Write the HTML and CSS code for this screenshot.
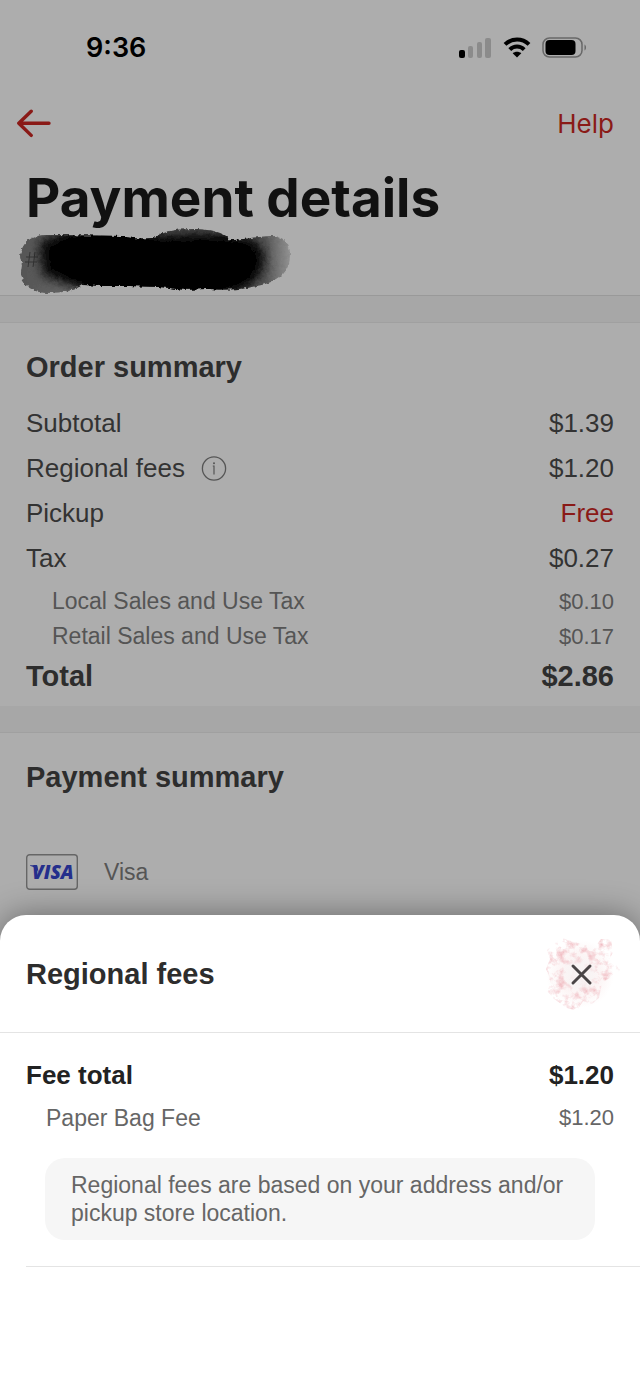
FILE: index.html
```html
<!DOCTYPE html>
<html lang="en">
<head>
<meta charset="utf-8">
<meta name="viewport" content="width=device-width, initial-scale=1">
<title>Payment details</title>
<link rel="stylesheet" href="styles.css">
</head>
<body>
<div class="screen">
  <div class="status">
    <span class="time">9:36</span>
    <span class="indicators">
      <svg width="34" height="22" viewBox="0 0 34 22" aria-hidden="true">
        <rect x="1" y="13" width="6" height="8" rx="2" fill="#000"/>
        <rect x="10" y="9" width="5" height="12" rx="2" fill="#8b8b8b"/>
        <rect x="19" y="5" width="5" height="16" rx="2" fill="#8b8b8b"/>
        <rect x="27" y="1" width="6" height="20" rx="2" fill="#8b8b8b"/>
      </svg>
      <svg width="28" height="22" viewBox="0 0 28 22" aria-hidden="true">
        <path d="M2 7.400C8.800 .9 19.200 .9 26 7.400" fill="none" stroke="#000" stroke-width="4"/>
        <path d="M6.800 12.600c4.200-4 10.200-4 14.400 0" fill="none" stroke="#000" stroke-width="4"/>
        <path d="M14 20.500l-4.300-4.300c2.400-2 6.200-2 8.600 0z" fill="#000"/>
      </svg>
      <svg width="46" height="22" viewBox="0 0 46 22" aria-hidden="true">
        <rect x="1" y="1" width="39" height="19" rx="6.500" fill="none" stroke="#686868" stroke-width="1.500"/>
        <rect x="3.500" y="3" width="30" height="15" rx="4" fill="#000"/>
        <path d="M42.500 7.500c2 1.200 2 4.800 0 6z" fill="#686868"/>
      </svg>
    </span>
  </div>

  <header class="header">
    <nav class="nav">
      <button class="icon-button" type="button" aria-label="Back">
        <svg width="36" height="30" viewBox="0 0 36 30" aria-hidden="true">
          <path d="M33 14.200H3M15.200 2.200L2.800 14.200l12.400 12.200" fill="none" stroke="#8a1a17" stroke-width="3.400" stroke-linecap="round" stroke-linejoin="round"/>
        </svg>
      </button>
      <a class="help" href="#help">Help</a>
    </nav>
    <h1 class="title">Payment details</h1>
    <svg class="scribble" width="274" height="67" viewBox="0 0 274 67" aria-hidden="true">
      <defs>
        <linearGradient id="edge" x1="0" x2="1" y1="0" y2="0">
          <stop offset="0" stop-color="#555"/>
          <stop offset=".25" stop-color="#6a6a6a"/>
          <stop offset=".3" stop-color="#222"/>
          <stop offset=".5" stop-color="#444"/>
          <stop offset=".75" stop-color="#444"/>
          <stop offset=".9" stop-color="#555"/>
          <stop offset="1" stop-color="#999"/>
        </linearGradient>
        <clipPath id="blot">
          <path d="M1 28C3 14 12 7 28 7l74 1c12 3 20 3 32 2 9-6 20-9 40-9 20 0 34 5 37 11l4 0c15-1 25-4 38-4 13 0 19 9 18 21-1 18-15 26-34 29-14 4-31 4-45 3-13 0-28 2-41-1-20-2-44-2-62-2l-26-1C57 62 45 65 27 65 12 64 2 56 2 44l1-7z"/>
        </clipPath>
        <filter id="rough" x="-5%" y="-10%" width="110%" height="120%">
          <feTurbulence type="fractalNoise" baseFrequency=".25" numOctaves="2" seed="4" result="n"/>
          <feDisplacementMap in="SourceGraphic" in2="n" scale="4" xChannelSelector="R" yChannelSelector="G"/>
          <feGaussianBlur stdDeviation=".5"/>
        </filter>
        <filter id="soft" x="-20%" y="-50%" width="140%" height="200%">
          <feGaussianBlur stdDeviation="6"/>
        </filter>
      </defs>
      <g filter="url(#rough)">
        <g clip-path="url(#blot)">
          <rect width="274" height="67" fill="url(#edge)"/>
          <path d="M20 14l30-12h60l30 10 40-4 30 2 25 4c12 6 14 24 2 36l-37 18H70L56 56 24 48z" fill="#000" filter="url(#soft)"/>
          <rect x="44" y="14" width="190" height="38" fill="#000" filter="url(#soft)"/>
          <path d="M60 6h60l15 8h70l20 2v44H80l-16-4z" fill="#000"  filter="url(#soft)"/>
        </g>
      </g>
      <path d="M11 24l-2 15M16 24l-2 15M7 29h12M6 34h12" stroke="#000" stroke-width="1" opacity=".4"/>
    </svg>
  </header>

  <section class="section">
    <h2 class="heading">Order summary</h2>
    <dl class="rows">
      <div class="row"><dt>Subtotal</dt><dd>$1.39</dd></div>
      <div class="row">
        <dt class="with-info">Regional fees
          <button class="icon-button" type="button" aria-label="About regional fees">
            <svg width="26" height="26" viewBox="0 0 26 26" aria-hidden="true">
              <circle cx="13" cy="12.500" r="11.600" fill="none" stroke="#555" stroke-width="1.300"/>
              <path d="M11.800 10H13v8.500" fill="none" stroke="#555" stroke-width="1.200"/>
              <circle cx="13" cy="7.200" r="1" fill="#555"/>
            </svg>
          </button>
        </dt>
        <dd>$1.20</dd>
      </div>
      <div class="row"><dt>Pickup</dt><dd class="free">Free</dd></div>
      <div class="row"><dt>Tax</dt><dd>$0.27</dd></div>
      <div class="row sub"><dt>Local Sales and Use Tax</dt><dd>$0.10</dd></div>
      <div class="row sub"><dt>Retail Sales and Use Tax</dt><dd>$0.17</dd></div>
      <div class="row total"><dt>Total</dt><dd>$2.86</dd></div>
    </dl>
  </section>

  <section class="section payment">
    <h2 class="heading">Payment summary</h2>
    <div class="method">
      <svg class="card" width="52" height="36" viewBox="0 0 52 36" aria-hidden="true">
        <rect x=".7" y=".7" width="50.600" height="34.600" rx="3" fill="none" stroke="#666" stroke-width="1.400"/>
        <path d="M4 11.200h5.500c1.200 0 1.800.5 2 1.500l1.300 6C11 15 8 12.600 4 11.700z" fill="#252f8c"/>
        <text class="card-brand" x="6" y="25">VISA</text>
      </svg>
      <span>Visa</span>
    </div>
  </section>

  <section class="sheet" role="dialog" aria-labelledby="sheet-title">
    <header class="sheet-header">
      <h2 class="heading" id="sheet-title">Regional fees</h2>
      <button class="icon-button" type="button" aria-label="Close">
        <svg width="80" height="80" viewBox="0 0 80 80" aria-hidden="true">
          <defs>
            <filter id="specks" x="0" y="0" width="100%" height="100%" color-interpolation-filters="sRGB">
              <feTurbulence type="fractalNoise" baseFrequency=".13" numOctaves="5" seed="21"/>
              <feColorMatrix values="0 0 0 0 .93  0 0 0 0 .68  0 0 0 0 .71  2.400 0 0 0 -1.050" result="s"/>
              <feComposite in="s" in2="SourceAlpha" operator="in"/>
              <feGaussianBlur stdDeviation=".6"/>
            </filter>
            <radialGradient id="haze">
              <stop offset="0" stop-color="#f7f3f3"/>
              <stop offset=".6" stop-color="#fcf5f5"/>
              <stop offset="1" stop-color="#fff"/>
            </radialGradient>
            <radialGradient id="center">
              <stop offset="0" stop-color="#f8f4f4"/>
              <stop offset=".6" stop-color="#f8f4f4" stop-opacity=".7"/>
              <stop offset="1" stop-color="#f8f4f4" stop-opacity="0"/>
            </radialGradient>
          </defs>
          <circle cx="38" cy="40" r="34" fill="url(#haze)"/>
          <path d="M5 16l7-6 8-6 12 4 10 2 11 3 6-8 10 1 2 12-3 6 10 12-9 7-9 6-3 15-7 6-9-3-6 10-10-3-13-9-5-6-5-7 6-8-4-9 4-10z" filter="url(#specks)" opacity=".8"/>
          <circle cx="38" cy="40" r="18" fill="url(#center)"/>
          <path d="M31 32l17 17M48 32L31 49" stroke="#4a4546" stroke-width="3" stroke-linecap="round"/>
        </svg>
      </button>
    </header>
    <div class="sheet-body">
      <dl class="rows">
        <div class="row fee-total"><dt>Fee total</dt><dd>$1.20</dd></div>
        <div class="row fee"><dt>Paper Bag Fee</dt><dd>$1.20</dd></div>
      </dl>
      <p class="note">Regional fees are based on your address and/or pickup store location.</p>
    </div>
  </section>
</div>
</body>
</html>
```

FILE: styles.css
```css
* {
  box-sizing: border-box;
}

body {
  margin: 0;
  background: #adadad;
  color: #333;
  font-family: "Liberation Sans", Arial, sans-serif;
  font-size: 26px;
}

h1, h2, p, dl, dd {
  margin: 0;
}

svg {
  display: block;
}

.screen {
  display: flex;
  flex-direction: column;
  min-height: 100vh;
}

.icon-button {
  padding: 0;
  border: 0;
  background: none;
}

.status {
  display: flex;
  align-items: center;
  justify-content: space-between;
  height: 96px;
  padding: 0 52px 0 86px;
}

.time {
  color: #000;
  font: 600 27px/32px Inter, sans-serif;
}

.indicators {
  display: flex;
  gap: 11px;
}

.header {
  border-bottom: 1px solid #999;
  box-shadow: 0 26px 0 #a7a7a7;
}

.nav {
  display: flex;
  align-items: center;
  justify-content: space-between;
  height: 56px;
  padding: 0 26px 0 16px;
}

.help {
  color: #8a1a17;
  font: 400 26px/32px Inter, sans-serif;
  text-decoration: none;
}

.title {
  padding: 16px 26px 0;
  color: #111;
  font: 700 53px/60px Inter, sans-serif;
}

.scribble {
  margin-left: 19px;
}

.section {
  padding: 24px 26px 7px;
  border-top: 1px solid #a0a0a0;
  background: #adadad;
}

.section:not(.payment) {
  box-shadow: 0 26px 0 #a7a7a7;
}

.header + .section,
.payment {
  margin-top: 26px;
}

.heading {
  color: #2d2d2d;
  font-size: 29px;
  font-weight: 700;
  line-height: 40px;
}

.section .rows {
  padding-top: 14px;
}

.row {
  display: flex;
  align-items: center;
  justify-content: space-between;
  line-height: 45px;
}

.with-info {
  display: flex;
  align-items: center;
  gap: 16px;
}

.free {
  color: #8a1a17;
}

.sub {
  padding-left: 26px;
  color: #555;
  font-size: 22px;
  line-height: 35px;
}

.sub dt,
.fee dt {
  font-size: 23px;
}

.row:not(.sub) + .sub {
  padding-top: 3px;
}

.total {
  color: #2d2d2d;
  font-size: 29px;
  font-weight: 700;
}

.method {
  display: flex;
  align-items: center;
  gap: 26px;
  padding: 57px 0 18px;
  color: #555;
  font-size: 23px;
}

.card-brand {
  fill: #252f8c;
  font: italic 800 19px "Open Sans", sans-serif;
}

.sheet {
  flex: 1;
  border-radius: 26px 26px 0 0;
  background: #fff;
  box-shadow: 0 0 32px rgba(0, 0, 0, .4);
}

.sheet-header {
  display: flex;
  align-items: center;
  justify-content: space-between;
  height: 118px;
  padding: 0 18px 0 26px;
  border-bottom: 1px solid #e4e4e4;
}

.sheet-body {
  margin-left: 26px;
  padding: 20px 0 26px;
  border-bottom: 1px solid #e4e4e4;
}

.sheet-body .rows {
  padding-right: 26px;
}

.fee-total {
  color: #222;
  font-weight: 700;
}

.fee {
  padding-left: 20px;
  color: #666;
  font-size: 22px;
  line-height: 40px;
}

.note {
  margin: 20px 45px 0 19px;
  padding: 13px 26px;
  border-radius: 20px;
  background: #f6f6f6;
  color: #666;
  font-size: 23px;
  line-height: 28px;
}
```
